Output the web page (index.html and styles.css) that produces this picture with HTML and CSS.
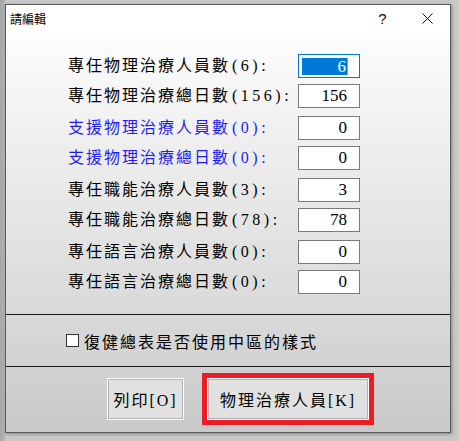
FILE: index.html
```html
<!DOCTYPE html>
<html lang="zh-Hant">
<head>
  <meta charset="UTF-8">
  <title>請編輯</title>
  <link rel="stylesheet" href="styles.css">
</head>
<body>
  <div class="dialog">
    <div class="title-bar">
      <span class="title">請編輯</span>
      <span class="title-btn help">?</span>
      <span class="title-btn close">
        <svg width="11" height="11" viewBox="0 0 11 11"><path d="M0.5 0.5 L10.5 10.5 M10.5 0.5 L0.5 10.5" stroke="#111" stroke-width="1"/></svg>
      </span>
    </div>

    <div class="form">
      <div class="row">
        <span class="label">專任物理治療人員數<span class="num">(6):</span></span>
        <div class="field focused"><span class="selected">6</span></div>
      </div>
      <div class="row">
        <span class="label">專任物理治療總日數<span class="num">(156):</span></span>
        <div class="field">156</div>
      </div>
      <div class="row">
        <span class="label blue">支援物理治療人員數<span class="num">(0):</span></span>
        <div class="field">0</div>
      </div>
      <div class="row">
        <span class="label blue">支援物理治療總日數<span class="num">(0):</span></span>
        <div class="field">0</div>
      </div>
      <div class="row">
        <span class="label">專任職能治療人員數<span class="num">(3):</span></span>
        <div class="field">3</div>
      </div>
      <div class="row">
        <span class="label">專任職能治療總日數<span class="num">(78):</span></span>
        <div class="field">78</div>
      </div>
      <div class="row">
        <span class="label">專任語言治療人員數<span class="num">(0):</span></span>
        <div class="field">0</div>
      </div>
      <div class="row">
        <span class="label">專任語言治療總日數<span class="num">(0):</span></span>
        <div class="field">0</div>
      </div>
    </div>

    <div class="check-area">
      <span class="checkbox"></span>
      <span class="check-text">復健總表是否使用中區的樣式</span>
    </div>

    <div class="buttons">
      <button class="btn print-btn">列印[O]</button>
      <button class="btn staff-btn marked">物理治療人員[K]</button>
    </div>
  </div>
</body>
</html>
```

FILE: styles.css
```css
body {
  margin: 0;
  padding: 4px 0 0 5px;
  background: linear-gradient(to right, #a6a6a6 0, #b4b4b4 5px, #c8c8c8 5px);
  font-family: "Liberation Serif", "Noto Sans CJK TC", serif;
  height: 441px;
  box-sizing: border-box;
  overflow: hidden;
}
.dialog {
  width: 446px;
  height: 429px;
  box-sizing: border-box;
  border: 1px solid #5c5c5c;
  background: linear-gradient(#ffffff 26px, #fbfbfb 40px, #d9d9d9 310px, #c9c9c9 100%);
  box-shadow: 1px 1px 3px rgba(0,0,0,0.35);
  display: flex;
  flex-direction: column;
}
.title-bar {
  height: 26px;
  background: #fff;
  display: flex;
  align-items: center;
  padding-left: 4px;
}
.title {
  flex: 1;
  font-family: "Noto Sans CJK TC", sans-serif;
  font-size: 12px;
  color: #000;
}
.title-btn {
  width: 45px;
  height: 26px;
  display: flex;
  align-items: center;
  justify-content: center;
  font-family: "Liberation Sans", sans-serif;
  font-size: 15px;
  color: #111;
}
.form {
  height: 283px;
  box-sizing: border-box;
  padding: 23px 0 0 62px;
}
.row {
  height: 30px;
  display: flex;
  align-items: flex-start;
}
.row:nth-child(even) {
  height: 32px;
}
.label {
  width: 230px;
  height: 24px;
  line-height: 24px;
  font-size: 16px;
  letter-spacing: 2px;
  color: #000;
  white-space: nowrap;
}
.label .num {
  letter-spacing: 3.5px;
  margin-left: 2px;
}
.label.blue {
  color: #1e1ef2;
}
.field {
  width: 62px;
  height: 24px;
  box-sizing: border-box;
  border: 1px solid #7a7a7a;
  background: #fff;
  display: flex;
  align-items: center;
  justify-content: flex-end;
  padding: 0 12px 0 3px;
  font-size: 17px;
  color: #000;
}
.field.focused {
  border-color: #0078d7;
  padding-right: 11px;
}
.selected {
  flex: 1;
  height: 17px;
  line-height: 17px;
  text-align: right;
  background: #0078d7;
  color: #fff;
  padding-right: 1px;
  border-right: 1px solid #e08a3a;
}
.check-area {
  height: 51px;
  border-top: 1px solid #1a1a1a;
  border-bottom: 1px solid #1a1a1a;
  display: flex;
  align-items: center;
  padding-left: 60px;
}
.checkbox {
  width: 13px;
  height: 13px;
  box-sizing: border-box;
  border: 1px solid #333;
  background: #fff;
  margin-right: 5px;
}
.check-text {
  font-size: 16px;
  letter-spacing: 2px;
  color: #000;
}
.buttons {
  flex: 1;
  display: flex;
  align-items: flex-start;
  gap: 23px;
  padding: 11px 0 0 101px;
}
.btn {
  height: 42px;
  border: 1px solid #fdfdfd;
  box-shadow: inset 0 0 0 1px #b4b4b4;
  background: #e1e1e1;
  font-family: "Liberation Serif", "Noto Sans CJK TC", serif;
  font-size: 16px;
  letter-spacing: 2px;
  color: #000;
  padding: 0;
}
.print-btn {
  width: 77px;
}
.staff-btn {
  width: 162px;
}
.marked {
  outline: 5px solid #ec1c24;
}
```
